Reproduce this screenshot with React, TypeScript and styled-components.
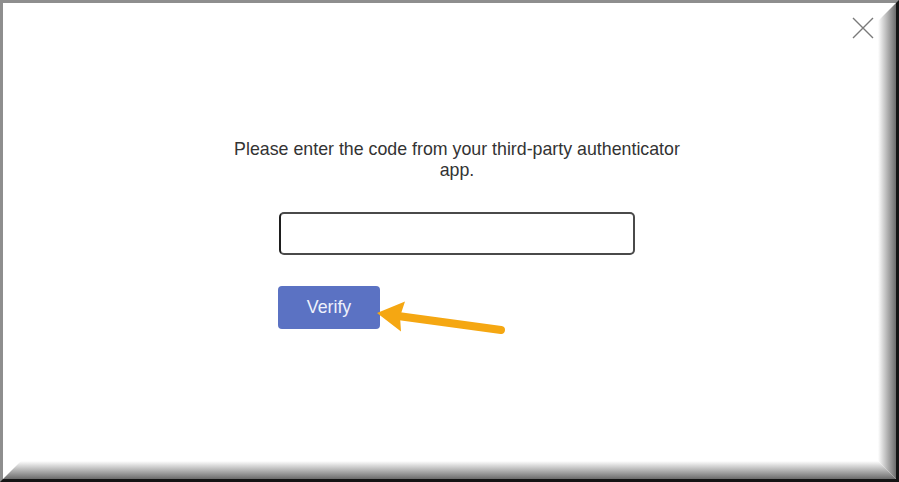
import * as React from 'react';
import styled, { createGlobalStyle } from 'styled-components';

const GlobalStyle = createGlobalStyle`
    html, body {
        margin: 0;
        padding: 0;
        background: #ffffff;
    }
    body {
        font-family: "Liberation Sans", Arial, sans-serif;
    }
`;

const Frame = styled.div`
    position: relative;
    box-sizing: border-box;
    width: 899px;
    height: 482px;
    background: #ffffff;
    border-top: 3px solid #8e8e8e;
    border-left: 3px solid #8e8e8e;
    border-right: 3px solid #141414;
    border-bottom: 3px solid #141414;
    display: flex;
    flex-direction: column;
    overflow: hidden;

    &::before {
        content: '';
        position: absolute;
        top: 0;
        right: 0;
        bottom: 0;
        width: 18px;
        background: linear-gradient(to right, #ffffff, #6c6c6c);
        clip-path: polygon(0 18px, 100% 0, 100% 100%, 0 calc(100% - 18px));
        pointer-events: none;
    }

    &::after {
        content: '';
        position: absolute;
        left: 0;
        right: 0;
        bottom: 0;
        height: 18px;
        background: linear-gradient(to bottom, #ffffff, #6c6c6c);
        clip-path: polygon(18px 0, calc(100% - 18px) 0, 100% 100%, 0 100%);
        pointer-events: none;
    }
`;

const Header = styled.div`
    display: flex;
    justify-content: flex-end;
    padding: 13px 21px 0 0;
`;

const CloseButton = styled.button`
    width: 24px;
    height: 24px;
    padding: 0;
    border: none;
    background: transparent;
    cursor: pointer;
    display: flex;
    align-items: center;
    justify-content: center;
`;

const Body = styled.div`
    display: flex;
    flex-direction: column;
    align-items: center;
    padding-left: 15px;
    margin-top: 99px;
`;

const Message = styled.p`
    width: 462px;
    margin: 0;
    text-align: center;
    font-size: 17.8px;
    line-height: 21px;
    color: #333333;
`;

const Form = styled.div`
    width: 356px;
    display: flex;
    flex-direction: column;
    align-items: flex-start;
    margin-top: 31px;
`;

const CodeInput = styled.input`
    box-sizing: border-box;
    width: 356px;
    height: 43px;
    border: 2px solid #4a4a4a;
    border-left-color: #1e1e1e;
    border-radius: 5px;
    background: #ffffff;
    outline: none;
    font-size: 16px;
    font-family: inherit;
    padding: 0 10px;
`;

const ButtonRow = styled.div`
    position: relative;
    margin-top: 31px;
    margin-left: -1px;
`;

const VerifyButton = styled.button`
    width: 102px;
    height: 43px;
    border: none;
    border-radius: 4px;
    background: #5b72c3;
    color: #eef1fb;
    font-family: "Liberation Sans", Arial, sans-serif;
    font-size: 17.8px;
    cursor: pointer;
`;

const Arrow = styled.svg`
    position: absolute;
    left: 98px;
    top: 10px;
    overflow: visible;
`;

export default function App() {
    return (
        <>
            <GlobalStyle />
            <Frame>
                <Header>
                    <CloseButton type="button" aria-label="Close">
                        <svg width="22" height="22" viewBox="0 0 22 22">
                            <path
                                d="M1 1 L21 21 M21 1 L1 21"
                                stroke="#7a7a7a"
                                strokeWidth="1.4"
                                fill="none"
                            />
                        </svg>
                    </CloseButton>
                </Header>
                <Body>
                    <Message>
                        Please enter the code from your third-party authenticator app.
                    </Message>
                    <Form>
                        <CodeInput type="text" />
                        <ButtonRow>
                            <VerifyButton type="button">Verify</VerifyButton>
                            <Arrow width="132" height="40" viewBox="0 0 132 40">
                                <line
                                    x1="22"
                                    y1="20"
                                    x2="125"
                                    y2="34"
                                    stroke="#f5a712"
                                    strokeWidth="8"
                                    strokeLinecap="round"
                                />
                                <polygon
                                    points="1,17 29,5.5 24,20.5 25,35.5"
                                    fill="#f5a712"
                                />
                            </Arrow>
                        </ButtonRow>
                    </Form>
                </Body>
            </Frame>
        </>
    );
}
